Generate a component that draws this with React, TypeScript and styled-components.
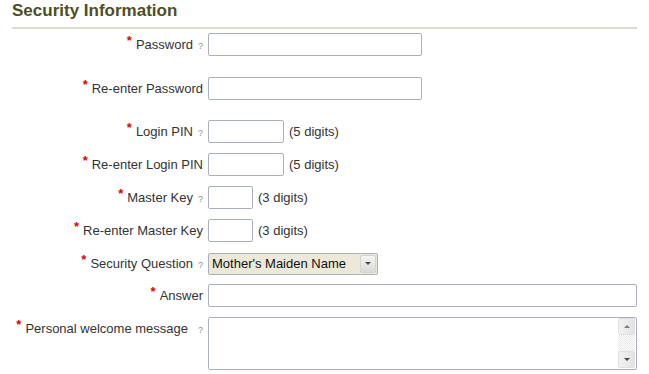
import styled, { createGlobalStyle } from "styled-components";

const GlobalStyle = createGlobalStyle`
  body {
    margin: 0;
    background: #ffffff;
    font-family: "Liberation Sans", Arial, sans-serif;
    font-size: 13px;
    color: #333333;
  }
`;

type Field = {
  label: string;
  help?: boolean;
  helpGap?: number;
  kind: "input" | "select" | "textarea";
  width?: number;
  hint?: string;
  top: number;
};

const FIELDS: Field[] = [
  { label: "Password", help: true, kind: "input", width: 214, top: 0 },
  { label: "Re-enter Password", kind: "input", width: 214, top: 21 },
  { label: "Login PIN", help: true, kind: "input", width: 76, hint: "(5 digits)", top: 20 },
  { label: "Re-enter Login PIN", kind: "input", width: 76, hint: "(5 digits)", top: 10 },
  { label: "Master Key", help: true, kind: "input", width: 45, hint: "(3 digits)", top: 10 },
  { label: "Re-enter Master Key", kind: "input", width: 45, hint: "(3 digits)", top: 10 },
  { label: "Security Question", help: true, kind: "select", top: 10 },
  { label: "Answer", kind: "input", top: 9 },
  { label: "Personal welcome message", help: true, helpGap: 10, kind: "textarea", top: 10 },
];

const App = () => {
  return (
    <>
      <GlobalStyle />
      <Page>
        <Title>Security Information</Title>
        <Divider />
        <Form>
          {FIELDS.map((field) => (
            <Row key={field.label} top={field.top} tall={field.kind === "textarea"}>
              <Label>
                <Required>*</Required>
                {field.label}
                {field.help && <Help gap={field.helpGap ?? 5}>?</Help>}
              </Label>
              <Control>
                {field.kind === "input" && <TextInput type="text" w={field.width} />}
                {field.kind === "select" && (
                  <SelectBox>
                    <SelectText>Mother's Maiden Name</SelectText>
                    <SelectButton>
                      <ArrowDown />
                    </SelectButton>
                  </SelectBox>
                )}
                {field.kind === "textarea" && (
                  <TextBox>
                    <TextArea />
                    <ScrollBar>
                      <ScrollButton>
                        <ArrowUp />
                      </ScrollButton>
                      <ScrollTrack />
                      <ScrollButton>
                        <ArrowDown />
                      </ScrollButton>
                    </ScrollBar>
                  </TextBox>
                )}
                {field.hint && <Hint>{field.hint}</Hint>}
              </Control>
            </Row>
          ))}
        </Form>
      </Page>
    </>
  );
};

export default App;

const Page = styled.div`
  padding: 0 12px;
`;

const Title = styled.h2`
  margin: 0 0 6px;
  padding-top: 1px;
  font-size: 17px;
  line-height: 20px;
  font-weight: bold;
  color: #4e4e24;
`;

const Divider = styled.div`
  height: 2px;
  background: #dcdccc;
`;

const Form = styled.div`
  display: flex;
  flex-direction: column;
  padding-top: 4px;
`;

const Row = styled.div<{ top: number; tall: boolean }>`
  display: grid;
  grid-template-columns: 191px 1fr;
  column-gap: 5px;
  align-items: ${({ tall }) => (tall ? "start" : "center")};
  margin-top: ${({ top }) => top}px;
`;

const Label = styled.div`
  height: 23px;
  text-align: right;
  white-space: nowrap;
  line-height: 23px;
  color: #333333;
`;

const Required = styled.span`
  color: #e00000;
  font-weight: bold;
  line-height: 1;
  vertical-align: 4px;
  margin-right: 4px;
`;

const Help = styled.span<{ gap: number }>`
  font-size: 9px;
  line-height: 1;
  color: #8a8a8a;
  margin-left: ${({ gap }) => gap}px;
`;

const Control = styled.div`
  display: flex;
  align-items: center;
  gap: 5px;
`;

const TextInput = styled.input<{ w?: number }>`
  box-sizing: border-box;
  width: ${({ w }) => (w ? `${w}px` : "100%")};
  height: 23px;
  margin: 0;
  padding: 0 3px;
  border: 1px solid #a9b0ba;
  border-radius: 2px;
  background: #ffffff;
  font-family: inherit;
  font-size: 13px;
  outline: none;
`;

const Hint = styled.span`
  line-height: 23px;
  color: #333333;
  white-space: nowrap;
`;

const SelectBox = styled.div`
  box-sizing: border-box;
  width: 170px;
  height: 22px;
  display: flex;
  align-items: center;
  border: 1px solid #a9b0ba;
  border-radius: 2px;
  background: #ece9d8;
`;

const SelectText = styled.span`
  flex: 1;
  padding-left: 3px;
  color: #111111;
  white-space: nowrap;
`;

const SelectButton = styled.div`
  box-sizing: border-box;
  width: 16px;
  height: 18px;
  margin-right: 1px;
  display: flex;
  align-items: center;
  justify-content: center;
  border: 1px solid #d2d2d2;
  border-radius: 2px;
  background: linear-gradient(#f6f6f6, #dadada);
`;

const ArrowDown = styled.span`
  width: 0;
  height: 0;
  border-left: 3px solid transparent;
  border-right: 3px solid transparent;
  border-top: 3px solid #4a4a4a;
`;

const ArrowUp = styled.span`
  width: 0;
  height: 0;
  border-left: 3px solid transparent;
  border-right: 3px solid transparent;
  border-bottom: 3px solid #7a7a7a;
`;

const TextBox = styled.div`
  box-sizing: border-box;
  width: 100%;
  height: 53px;
  display: flex;
  border: 1px solid #a9b0ba;
  border-radius: 2px;
  background: #ffffff;
`;

const TextArea = styled.textarea`
  flex: 1;
  margin: 0;
  padding: 2px 3px;
  border: none;
  resize: none;
  outline: none;
  overflow: hidden;
  font-family: inherit;
  font-size: 13px;
`;

const ScrollBar = styled.div`
  width: 17px;
  margin: 0 1px 1px 0;
  display: flex;
  flex-direction: column;
`;

const ScrollButton = styled.div`
  box-sizing: border-box;
  height: 17px;
  display: flex;
  align-items: center;
  justify-content: center;
  border: 1px solid #e0e0e0;
  border-radius: 2px;
  background: linear-gradient(90deg, #f2f2f2, #e2e2e2);
`;

const ScrollTrack = styled.div`
  flex: 1;
  background-color: #ffffff;
  background-image: repeating-conic-gradient(#e6e6e6 0 25%, #ffffff 0 50%);
  background-size: 2px 2px;
`;
